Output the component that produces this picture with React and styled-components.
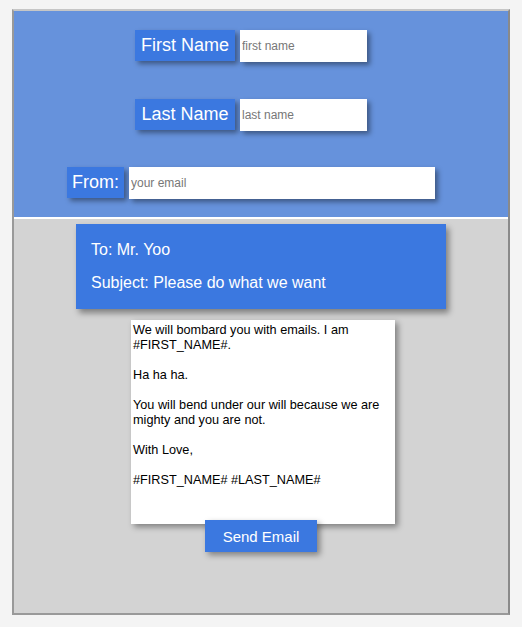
import React from 'react'
import styled, { createGlobalStyle } from 'styled-components'

const GlobalStyle = createGlobalStyle`
    body {
        margin: 0;
        background: #f4f4f4;
        font-family: "Liberation Sans", Arial, sans-serif;
    }
`;

const Frame = styled.div`
    box-sizing: border-box;
    width: 498px;
    height: 606px;
    margin: 9px 0 0 12px;
    border: 2px solid #999;
    border-top-color: #c6c6c6;
    border-right-color: #8a8a8a;
    display: flex;
    flex-direction: column;
    background: #d3d3d3;
`;

const Header = styled.div`
    background: #6692dc;
    height: 208px;
    box-sizing: border-box;
    padding-top: 19px;
    border-bottom: 2px solid #fff;
    display: flex;
    flex-direction: column;
    align-items: center;
    gap: 36.5px;
`;

const Row = styled.div`
    display: flex;
    align-items: flex-start;
    gap: 5px;
    margin-right: 20px;
    height: 32px;
`;

const Label = styled.label`
    background: #3b78e0;
    color: #fff;
    font-size: 18px;
    height: 31px;
    line-height: 31px;
    padding: 0 5px;
    min-width: ${p => p.$wide ? '90px' : '0'};
    text-align: center;
    box-shadow: 3px 3px 5px rgba(0, 0, 0, 0.4);
`;

const Field = styled.input`
    box-sizing: border-box;
    width: ${p => p.$width}px;
    height: 32px;
    border: none;
    outline: none;
    padding: 0 2px;
    font-family: "Liberation Sans", Arial, sans-serif;
    font-size: 12px;
    background: #fff;
    box-shadow: 3px 3px 5px rgba(0, 0, 0, 0.4);
    &::placeholder {
        color: #777;
    }
`;

const Body = styled.div`
    flex: 1;
    display: flex;
    flex-direction: column;
    align-items: center;
    padding-top: 5px;
`;

const Card = styled.div`
    box-sizing: border-box;
    width: 370px;
    height: 85px;
    background: #3b78e0;
    color: #fff;
    font-size: 16px;
    line-height: 18px;
    padding: 17px 15px 15px;
    display: flex;
    flex-direction: column;
    gap: 15px;
    box-shadow: 3px 4px 6px rgba(0, 0, 0, 0.4);
`;

const Message = styled.textarea`
    box-sizing: border-box;
    width: 264px;
    height: 204px;
    margin: 11px 0 0 4px;
    border: none;
    outline: none;
    resize: none;
    padding: 3px 2px 2px;
    font-family: "Liberation Sans", Arial, sans-serif;
    font-size: 12.7px;
    line-height: 15px;
    color: #000;
    background: #fff;
    box-shadow: 3px 3px 6px rgba(0, 0, 0, 0.4);
`;

const SendButton = styled.button`
    position: relative;
    width: 112px;
    height: 32px;
    margin-top: -4px;
    border: none;
    background: #3b78e0;
    color: #fff;
    font-family: "Liberation Sans", Arial, sans-serif;
    font-size: 15px;
    box-shadow: 3px 3px 6px rgba(0, 0, 0, 0.4);
`;

const letter = `We will bombard you with emails. I am #FIRST_NAME#.

Ha ha ha.

You will bend under our will because we are mighty and you are not.

With Love,

#FIRST_NAME# #LAST_NAME#`;

const App = () => {
    return (
        <>
        <GlobalStyle />
        <Frame>
            <Header>
                <Row>
                    <Label $wide>First Name</Label>
                    <Field $width={127} placeholder="first name" />
                </Row>
                <Row>
                    <Label $wide>Last Name</Label>
                    <Field $width={127} placeholder="last name" />
                </Row>
                <Row>
                    <Label>From:</Label>
                    <Field $width={306} placeholder="your email" />
                </Row>
            </Header>
            <Body>
                <Card>
                    <div>To: Mr. Yoo</div>
                    <div>Subject: Please do what we want</div>
                </Card>
                <Message defaultValue={letter} />
                <SendButton>Send Email</SendButton>
            </Body>
        </Frame>
        </>
    )
}

export default App
